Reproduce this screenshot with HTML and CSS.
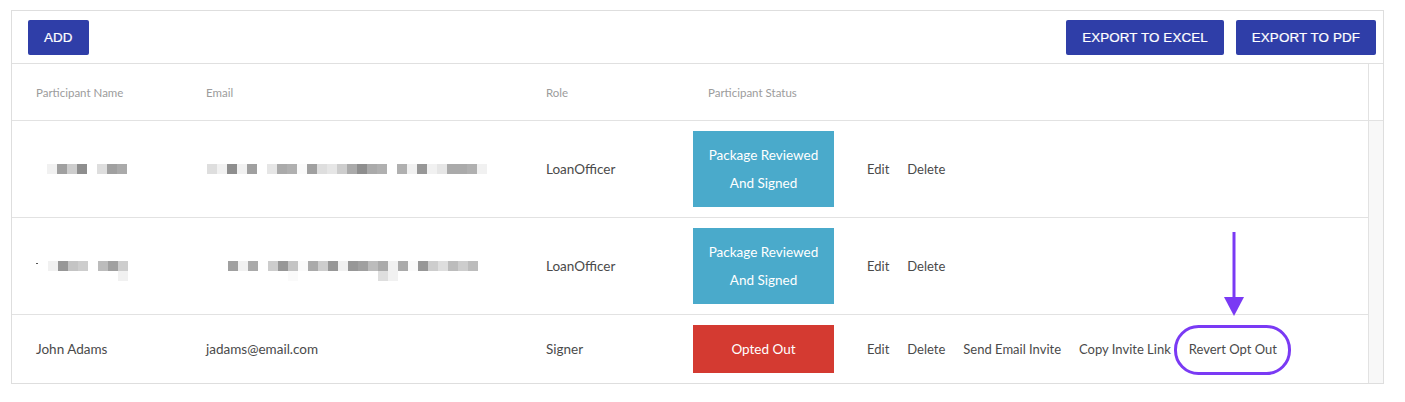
FILE: index.html
```html
<!DOCTYPE html>
<html>
<head>
<meta charset="utf-8">
<link rel="stylesheet" href="styles.css">
</head>
<body>
<div class="panel">
  <div class="toolbar">
    <button class="btn">ADD</button>
    <div class="toolbar-right">
      <button class="btn">EXPORT TO EXCEL</button>
      <button class="btn">EXPORT TO PDF</button>
    </div>
  </div>
  <div class="table-wrap">
    <div class="table">
      <div class="row head">
        <div class="cell c1">Participant Name</div>
        <div class="cell c2">Email</div>
        <div class="cell c3">Role</div>
        <div class="cell c4 hstatus">Participant Status</div>
        <div class="cell c5"></div>
      </div>
      <div class="row">
        <div class="cell c1">
          <div class="blur b-n1">
            <i class="a"></i><i class="b"></i><i class="c"></i><i class="d"></i><i class="w"></i><i class="e"></i><i class="b"></i><i class="f"></i>
          </div>
        </div>
        <div class="cell c2">
          <div class="blur b-e1">
            <i class="e"></i><i class="a"></i><i class="d"></i><i class="a"></i><i class="b"></i><i class="w"></i><i class="g"></i><i class="f"></i><i class="h"></i><i class="z"></i><i class="b"></i><i class="e"></i><i class="g"></i><i class="c"></i><i class="f"></i><i class="d"></i><i class="f"></i><i class="h"></i><i class="w"></i><i class="h"></i><i class="a"></i><i class="j"></i><i class="a"></i><i class="g"></i><i class="f"></i><i class="f"></i><i class="h"></i><i class="a"></i>
          </div>
        </div>
        <div class="cell c3">LoanOfficer</div>
        <div class="cell c4"><div class="badge blue">Package Reviewed<br>And Signed</div></div>
        <div class="cell c5 actions"><a>Edit</a><a>Delete</a></div>
      </div>
      <div class="row">
        <div class="cell c1">
          <div class="blur-wrap">
            <span class="dash"></span>
            <div class="blur-stack">
              <div class="blur">
                <i class="a"></i><i class="j"></i><i class="i"></i><i class="c"></i><i class="w"></i><i class="k"></i><i class="b"></i><i class="c"></i>
              </div>
              <div class="blur">
                <i class="w"></i><i class="w"></i><i class="w"></i><i class="w"></i><i class="w"></i><i class="w"></i><i class="w"></i><i class="a"></i>
              </div>
            </div>
          </div>
        </div>
        <div class="cell c2">
          <div class="blur-stack b-e2">
            <div class="blur">
              <i class="b"></i><i class="a"></i><i class="f"></i><i class="w"></i><i class="c"></i><i class="j"></i><i class="i"></i><i class="z"></i><i class="f"></i><i class="c"></i><i class="j"></i><i class="a"></i><i class="j"></i><i class="b"></i><i class="k"></i><i class="f"></i><i class="a"></i><i class="f"></i><i class="z"></i><i class="j"></i><i class="c"></i><i class="e"></i><i class="k"></i><i class="c"></i><i class="k"></i>
            </div>
            <div class="blur">
              <i class="w"></i><i class="w"></i><i class="w"></i><i class="w"></i><i class="w"></i><i class="w"></i><i class="z"></i><i class="w"></i><i class="w"></i><i class="w"></i><i class="w"></i><i class="w"></i><i class="w"></i><i class="w"></i><i class="w"></i><i class="e"></i><i class="a"></i>
            </div>
          </div>
        </div>
        <div class="cell c3">LoanOfficer</div>
        <div class="cell c4"><div class="badge blue">Package Reviewed<br>And Signed</div></div>
        <div class="cell c5 actions"><a>Edit</a><a>Delete</a></div>
      </div>
      <div class="row last">
        <div class="cell c1">John Adams</div>
        <div class="cell c2">jadams@email.com</div>
        <div class="cell c3">Signer</div>
        <div class="cell c4"><div class="badge red">Opted Out</div></div>
        <div class="cell c5 actions"><a>Edit</a><a>Delete</a><a>Send Email Invite</a><a>Copy Invite Link</a><a class="revert">Revert Opt Out</a></div>
      </div>
    </div>
    <div class="scrollbar">
      <div class="sb-head"></div>
      <div class="sb-track"></div>
    </div>
  </div>
</div>
<svg class="annot" width="1405" height="402" viewBox="0 0 1405 402">
  <line x1="1234" y1="232" x2="1234" y2="300" stroke="#7a3af4" stroke-width="3"/>
  <polygon points="1224,297 1244,297 1234,316" fill="#7a3af4"/>
  <rect x="1175.5" y="326.5" width="114" height="47" rx="23" ry="23" fill="none" stroke="#7a3af4" stroke-width="3"/>
</svg>
</body>
</html>
```

FILE: styles.css
```css
* { box-sizing: border-box; }
html, body { margin: 0; padding: 0; background: #fff; }
body {
  padding: 10px 0 0 11px;
  font-family: "Lato", "Liberation Sans", sans-serif;
  position: relative;
  width: 1405px;
  height: 402px;
  overflow: hidden;
}
.panel {
  width: 1373px;
  border: 1px solid #dedede;
}
.toolbar {
  height: 53px;
  display: flex;
  align-items: center;
  justify-content: space-between;
  padding: 0 7px 0 16px;
  border-bottom: 1px solid #e0e0e0;
}
.toolbar-right { display: flex; gap: 12px; }
.btn {
  height: 35px;
  padding: 0 16px;
  border: none;
  border-radius: 2px;
  background: #2f3ea8;
  color: #fff;
  font-family: "Liberation Sans", Arial, sans-serif;
  font-size: 13.4px;
  font-weight: normal;
  -webkit-text-stroke: 0.2px #fff;
  letter-spacing: 0.1px;
}
.table-wrap { display: flex; }
.table { width: 1357px; }
.row {
  display: grid;
  grid-template-columns: 170px 339px 147px 170px 1fr;
  border-bottom: 1px solid #e2e2e2;
  min-height: 97px;
  align-items: center;
}
.row.head { min-height: 57px; }
.row.last { border-bottom: none; min-height: 68px; }
.cell {
  padding: 10px 0 10px 24px;
  font-size: 13.5px;
  color: #4a4a4a;
}
.c3 { padding-left: 25px; }
.c4 { padding-left: 25px; }
.c5 { padding-left: 29px; }
.head .cell { font-size: 11.5px; color: #9c9c9c; }
.head .hstatus { padding-left: 40px; }
.badge {
  width: 141px;
  color: #fff;
  text-align: center;
  font-size: 13.5px;
  line-height: 28px;
  padding: 10px 0;
}
.badge.blue { background: #4aaacb; }
.badge.red { background: #d43a31; }
.actions { display: flex; gap: 18px; font-size: 13px; }
.actions a { color: #4a4a4a; }
.scrollbar { width: 15px; display: flex; flex-direction: column; }
.sb-head { height: 57px; border-left: 1px solid #e2e2e2; border-bottom: 1px solid #e2e2e2; }
.sb-track { flex: 1; background: #f8f8f8; border-left: 1px solid #e2e2e2; }
.blur { display: flex; height: 10px; }
.blur i { display: block; width: 10px; height: 10px; }
.b-n1 { margin-left: 11px; }
.b-e1 { margin-left: 1px; }
.b-e2 { margin-left: 22px; padding-top: 10px; }
.blur-stack { display: flex; flex-direction: column; }
.blur-wrap { display: flex; align-items: flex-start; }
.blur-wrap .blur-stack { padding-top: 10px; }
.dash { display: block; width: 2px; height: 1px; background: #555; margin-top: 12px; margin-right: 10px; }
i.w { background: transparent; }
i.z { background: #fafafa; }
i.a { background: #f1f1f1; }
i.g { background: #e6e6e6; }
i.e { background: #dedede; }
i.c { background: #cdcdcd; }
i.i { background: #c4c4c4; }
i.k { background: #bcbcbc; }
i.h { background: #b0b0b0; }
i.f { background: #aaaaaa; }
i.b { background: #a0a0a0; }
i.j { background: #979797; }
i.d { background: #8e8e8e; }
.annot { position: absolute; left: 0; top: 0; pointer-events: none; }
```
